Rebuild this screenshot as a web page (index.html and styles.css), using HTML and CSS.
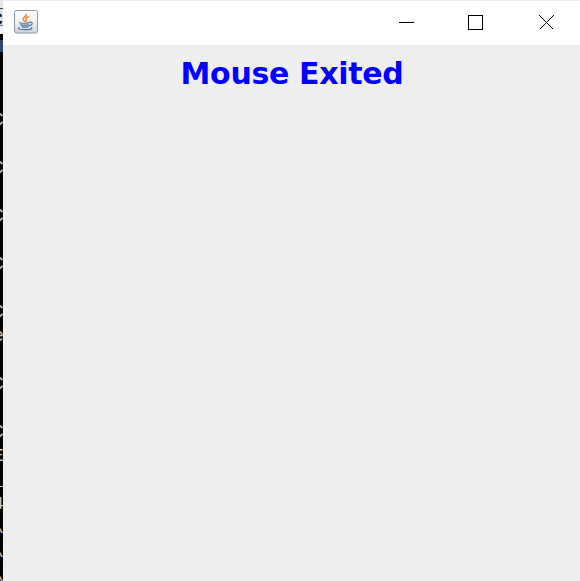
FILE: index.html
```html
<!DOCTYPE html>
<html lang="en">
<head>
<meta charset="utf-8">
<title>Mouse events</title>
<link rel="stylesheet" href="styles.css">
</head>
<body>
<div class="desktop">
<aside class="behind">
<div class="behind-bar"><span class="mark">C</span></div>
<pre class="console">

C

C

C

C

C
e

C

C
E
_
4
\
\
\</pre>
</aside>
<main class="window">
<header class="titlebar">
<svg class="java" viewBox="0 0 24 24" aria-hidden="true">
<defs><linearGradient id="tile" x1="0" y1="0" x2="0" y2="1"><stop offset="0" stop-color="#fff"/><stop offset=".5" stop-color="#f0f2f4"/><stop offset="1" stop-color="#ccd4dc"/></linearGradient></defs>
<rect x=".5" y=".5" width="23" height="22.5" rx="2" fill="url(#tile)" stroke="#8d98a5"/>
<g fill="none" stroke-linecap="round">
<path d="M12.200 4.200c1 2.300-4.200 3.200-3 5.400.3.600.8 1 1.400 1.500M14.300 6.800c-2.800 1-2.700 1.800-1.900 2.800.5.700.1 1.200-.4 1.600" stroke="#ec8636" stroke-width="1.500"/>
<path d="M5.800 12.400c-1 1 6.200 1.200 9.600.2M6.800 14.600c1.500.8 6 .8 8 .1M8 16.600c1.600.6 4 .6 5.700 0M5 17.800c-2 1.300 2 1.900 6.500 1.800 4 0 7.500-.8 6-1.800M15.800 12.200c3.700-.7 2.900 3-.8 3.800" stroke="#4f789c" stroke-width="1.200"/>
</g>
</svg>
<svg class="controls" viewBox="0 0 156 16" shape-rendering="crispEdges" aria-hidden="true">
<path d="M0 7.500h15M69.500.5h14v14h-14z" fill="none" stroke="#000"/>
<path d="M140.500.5l14 14M154.500.5l-14 14" fill="none" stroke="#000"/>
</svg>
</header>
<section class="content"><h1>Mouse Exited</h1></section>
</main>
</div>
</body>
</html>
```
FILE: styles.css
```css
* { box-sizing: border-box; }
body { margin: 0; overflow: hidden; }
.desktop { display: flex; width: 580px; height: 581px; background: #000; }
.behind { width: 3px; overflow: hidden; }
.behind-bar {
  height: 60px;
  background: linear-gradient(#e5e6ea 0 8px, #444 8px 9px, #dfe2e7 9px 25px, #777 25px 26px, #f3f3f3 26px 34px, #000 34px 40px, #31476b 40px 52px, #000 52px);
}
.mark {
  display: block;
  padding-top: 8px;
  margin-left: -8px;
  color: #111;
  font: bold 18px/24px "Liberation Mono", monospace;
}
.console {
  width: 12px;
  margin: 0 0 0 -7px;
  padding-top: 24px;
  color: #c8c8c8;
  font: 18px/24px "Liberation Mono", monospace;
}
.window { flex: 1; display: flex; flex-direction: column; background: #eee; }
.titlebar {
  display: flex;
  justify-content: space-between;
  height: 45px;
  padding: 9px 25px 0 11px;
  border-top: 1px solid #eee;
  background: #fff;
}
.java { width: 24px; height: 24px; }
.controls { width: 156px; height: 16px; margin-top: 5px; }
.content { flex: 1; text-align: center; }
h1 {
  margin: 11px 0 0;
  padding-left: 1px;
  color: #00f;
  font: bold 30px/36px "DejaVu Sans", sans-serif;
  letter-spacing: -.33px;
}
```
